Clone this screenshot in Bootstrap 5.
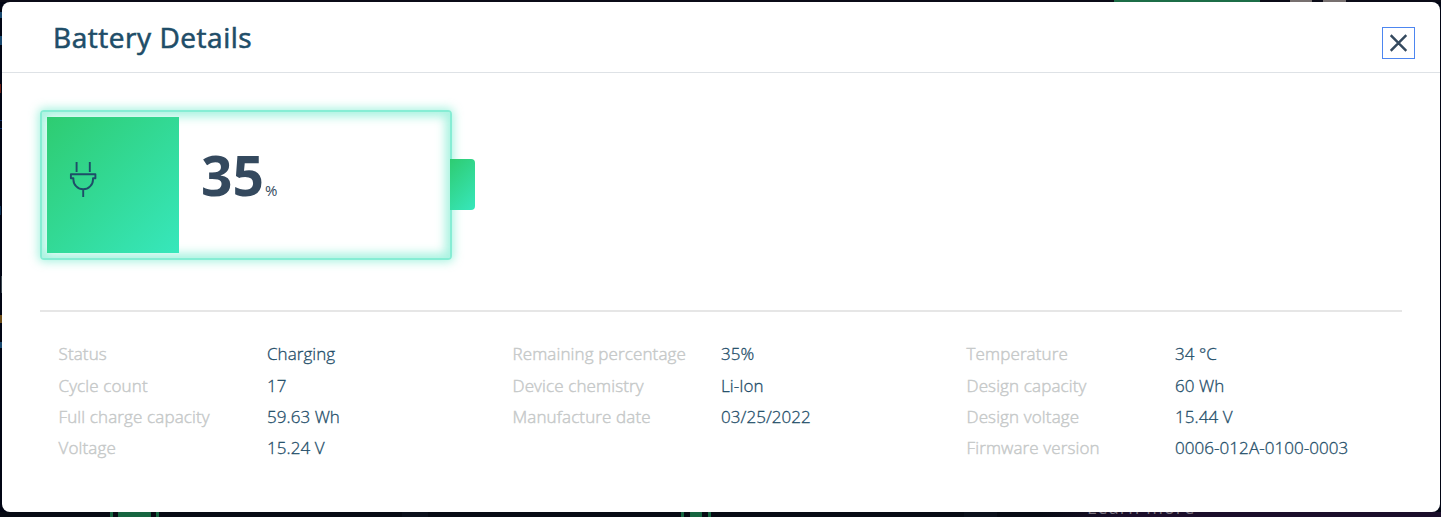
<!DOCTYPE html>
<html lang="en">
<head>
<meta charset="utf-8">
<title>Battery Details</title>
<link href="https://cdn.jsdelivr.net/npm/bootstrap@5.3.0/dist/css/bootstrap.min.css" rel="stylesheet">
<style>
body{height:517px;overflow:hidden;font-family:"Open Sans","Noto Sans",sans-serif;color:#1e4d68;background:#070b14}
.page-behind{inset:0;background:
 linear-gradient(#1c6d47,#1c6d47) 1114px 0/146px 2px no-repeat,
 linear-gradient(#77706f,#77706f) 1290px 0/22px 2px no-repeat,
 linear-gradient(#77706f,#77706f) 1323px 0/23px 2px no-repeat,
 linear-gradient(#166540,#166540) 110px 512px/3px 5px no-repeat,
 linear-gradient(#166540,#166540) 118px 512px/33px 5px no-repeat,
 linear-gradient(#166540,#166540) 156px 512px/3px 5px no-repeat,
 linear-gradient(#166540,#166540) 681px 512px/3px 5px no-repeat,
 linear-gradient(#166540,#166540) 690px 512px/12px 5px no-repeat,
 linear-gradient(#166540,#166540) 708px 512px/3px 5px no-repeat,
 linear-gradient(#0c111c,#0c111c) 402px 512px/26px 5px no-repeat,
 linear-gradient(#0c111c,#0c111c) 964px 512px/33px 5px no-repeat,
 linear-gradient(#17476e,#17476e) 0 12px/2px 6px no-repeat,
 linear-gradient(#17476e,#17476e) 0 36px/2px 9px no-repeat,
 linear-gradient(#6b1d12,#6b1d12) 0 84px/1px 9px no-repeat,
 linear-gradient(#0d2d66,#0d2d66) 0 120px/2px 1px no-repeat,
 linear-gradient(#0d2d66,#0d2d66) 0 128px/2px 1px no-repeat,
 linear-gradient(#0a3054,#0a3054) 0 206px/1px 9px no-repeat,
 linear-gradient(#3b4750,#3b4750) 1px 276px/1px 17px no-repeat,
 linear-gradient(#6b4c18,#6b4c18) 0 315px/2px 8px no-repeat,
 linear-gradient(#17476e,#17476e) 0 342px/2px 6px no-repeat,
 linear-gradient(90deg,#070b14,#1b0e2b 90px) 1040px 512px/401px 5px no-repeat,
 linear-gradient(#070b14,#070b14) 0 512px/100% 5px no-repeat,
 linear-gradient(#0b0c18,#0b0c18) 0 0/100% 2px no-repeat,#010514}
.learn-link{left:1087px;top:494px;font-size:18px;line-height:26px;letter-spacing:1.1px;color:#79717d;white-space:nowrap}
.battery-dialog{margin:2px 1px 5px 2px;height:510px;border-radius:8px;background:#fff}
.dialog-head{height:71px;padding:0 25px 0 51px;border-bottom:1px solid #dee2e6}
.dialog-title{font-size:28px;font-weight:400;-webkit-text-stroke:.6px #1e4d68;line-height:40px;margin-top:15px;white-space:nowrap;letter-spacing:.54px}
.close-box{width:33px;height:32px;margin-top:25px;border:1px solid #4d86f0;background:#fff}
.dialog-main{padding:37px 38px 0}
.cell-shell{width:412px;height:150px;border:2px solid #86edd4;border-radius:4px;padding:5px;
 box-shadow:0 0 10px 2px #86edd4b0,inset 0 0 10px 5px #86edd4b0}
.cell-fill{width:132px;height:136px;background:linear-gradient(135deg,#2ecc71,#37e7bc);padding:44px 0 0 22px}
.cell-tip{width:25px;height:51px;margin:0 0 1px -2px;background:linear-gradient(135deg,#2ecc71,#37e7bc);border-radius:0 4px 4px 0;position:relative}
.charge{color:#34495e;margin-left:22px;line-height:75px;padding-top:20px}
.charge b{font-size:55px;font-weight:700}
.charge span{font-size:15px;margin-left:1px}
.rule{height:2px;background:#e6e6e6;margin-top:50px}
.specs{padding-top:26.2px;font-size:17px;line-height:31.3px;--bs-gutter-x:37px;margin:0}
.specs dl>div:nth-child(2){padding-top:.4px;margin-bottom:-.4px}
.specs dt{width:208.5px;font-weight:300;color:#c6c9c9;-webkit-text-stroke:.45px #c6c9c9;letter-spacing:.13px;white-space:nowrap}
.specs dd{margin:0;font-weight:300;-webkit-text-stroke:.3px #1e4d68;letter-spacing:.06px;white-space:nowrap}
</style>
</head>
<body>
<div class="page-behind position-absolute"><span class="learn-link position-absolute">Learn more</span></div>
<main class="battery-dialog position-relative">
 <header class="dialog-head d-flex justify-content-between align-items-start">
  <h1 class="dialog-title mb-0">Battery Details</h1>
  <button class="close-box p-0 d-flex align-items-center justify-content-center" aria-label="Close">
   <svg width="18" height="18" viewBox="0.5 0 18 18" fill="none" stroke="#34495e" stroke-width="2.4"><path d="M1.2 1.2 16.8 16.8M16.8 1.2 1.2 16.8"/></svg>
  </button>
 </header>
 <div class="dialog-main">
  <div class="d-flex align-items-center">
   <div class="cell-shell d-flex">
    <div class="cell-fill">
     <svg class="d-block" width="28" height="38" viewBox="0 0 28 38" fill="none" stroke="#1e4d68" stroke-width="1.9" stroke-linejoin="round"><path d="M7.6 1v10M20.8 1v10M1.9 13.2H26.4v4h-2.4v1.2a9.8 9.9 0 0 1-19.6 0v-1.2H1.9zM14.2 28.5V36"/></svg>
    </div>
    <div class="charge text-nowrap"><b>35</b><span>%</span></div>
   </div>
   <div class="cell-tip"></div>
  </div>
  <div class="rule"></div>
  <div class="specs row">
   <dl class="col-4 mb-0">
    <div class="d-flex"><dt>Status</dt><dd>Charging</dd></div>
    <div class="d-flex"><dt>Cycle count</dt><dd>17</dd></div>
    <div class="d-flex"><dt>Full charge capacity</dt><dd>59.63 Wh</dd></div>
    <div class="d-flex"><dt>Voltage</dt><dd>15.24 V</dd></div>
   </dl>
   <dl class="col-4 mb-0">
    <div class="d-flex"><dt>Remaining percentage</dt><dd>35%</dd></div>
    <div class="d-flex"><dt>Device chemistry</dt><dd>Li-Ion</dd></div>
    <div class="d-flex"><dt>Manufacture date</dt><dd>03/25/2022</dd></div>
   </dl>
   <dl class="col-4 mb-0">
    <div class="d-flex"><dt>Temperature</dt><dd>34 °C</dd></div>
    <div class="d-flex"><dt>Design capacity</dt><dd>60 Wh</dd></div>
    <div class="d-flex"><dt>Design voltage</dt><dd>15.44 V</dd></div>
    <div class="d-flex"><dt>Firmware version</dt><dd>0006-012A-0100-0003</dd></div>
   </dl>
  </div>
 </div>
</main>
<script src="https://cdn.jsdelivr.net/npm/bootstrap@5.3.0/dist/js/bootstrap.bundle.min.js"></script>
</body>
</html>
